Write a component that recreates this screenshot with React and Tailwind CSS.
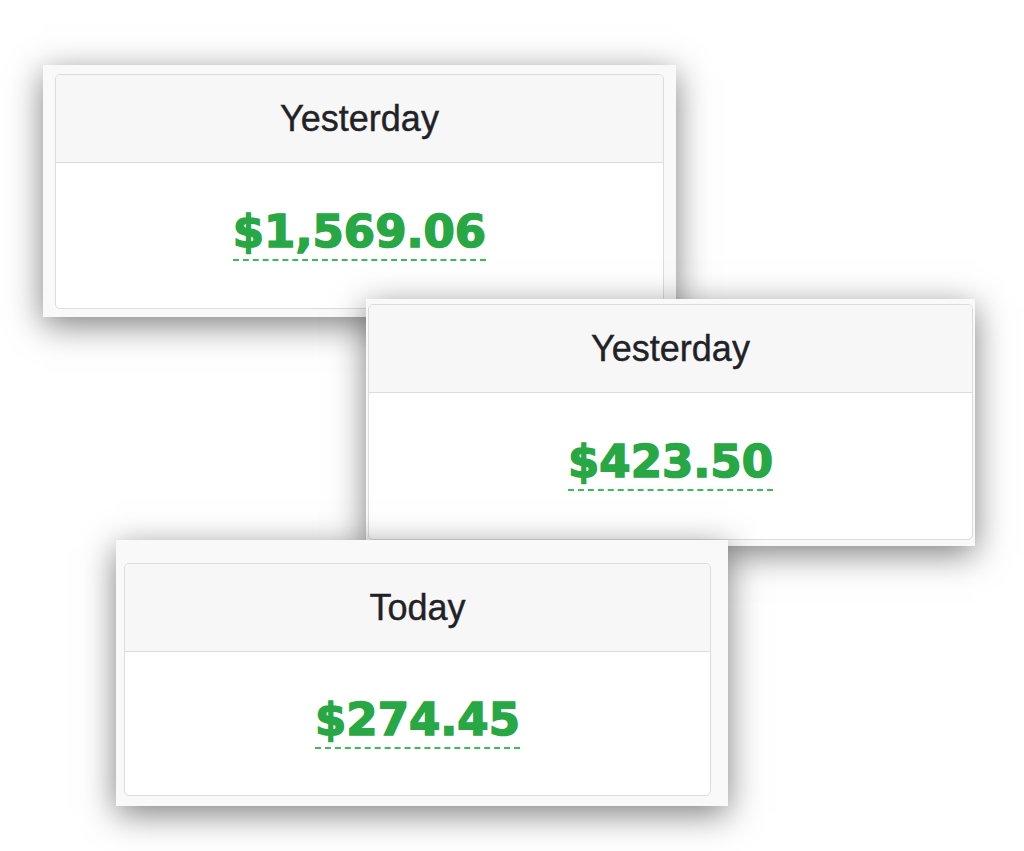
import React from "react";

const cards = [
  {
    label: "Yesterday",
    amount: "$1,569.06",
    frame: "left-[43px] top-[65px] w-[633px] h-[252px] pl-[12px] pr-[12px] pt-[9px] pb-[8px] z-10",
  },
  {
    label: "Yesterday",
    amount: "$423.50",
    frame: "left-[366px] top-[299px] w-[609px] h-[247px] pl-[2px] pr-[2px] pt-[5px] pb-[6px] z-20",
  },
  {
    label: "Today",
    amount: "$274.45",
    frame: "left-[116px] top-[540px] w-[612px] h-[266px] pl-[8px] pr-[17px] pt-[23px] pb-[10px] z-30",
  },
];

function StatCard({ label, amount, frame }) {
  return (
    <div
      className={`absolute bg-[#f9f9f9] shadow-[0_8px_32px_rgba(0,0,0,0.5)] ${frame}`}
    >
      <div className="flex h-full flex-col overflow-hidden rounded-[5px] border border-[#dcdcdc] bg-white">
        <div className="flex h-[88px] shrink-0 items-center justify-center border-b border-[#dcdcdc] bg-[#f7f7f7]">
          <h3 className="font-['Liberation_Sans',Arial,sans-serif] text-[36px] leading-none text-[#1f2226] [-webkit-text-stroke:0.4px_#1f2226]">
            {label}
          </h3>
        </div>
        <div className="flex flex-1 items-center justify-center">
          {/* heavy figure, dashed like an abbr hint */}
          <span className="mb-[6px] border-b-2 border-dashed border-[#3dbb5a] font-['DejaVu_Sans',sans-serif] text-[45px] font-bold leading-[1.2] text-[#28a745] [-webkit-text-stroke:1.6px_#28a745]">
            {amount}
          </span>
        </div>
      </div>
    </div>
  );
}

export default function App() {
  return (
    <div className="relative h-[851px] w-[1024px] overflow-hidden bg-white">
      {cards.map((c, i) => (
        <StatCard key={i} label={c.label} amount={c.amount} frame={c.frame} />
      ))}
    </div>
  );
}
